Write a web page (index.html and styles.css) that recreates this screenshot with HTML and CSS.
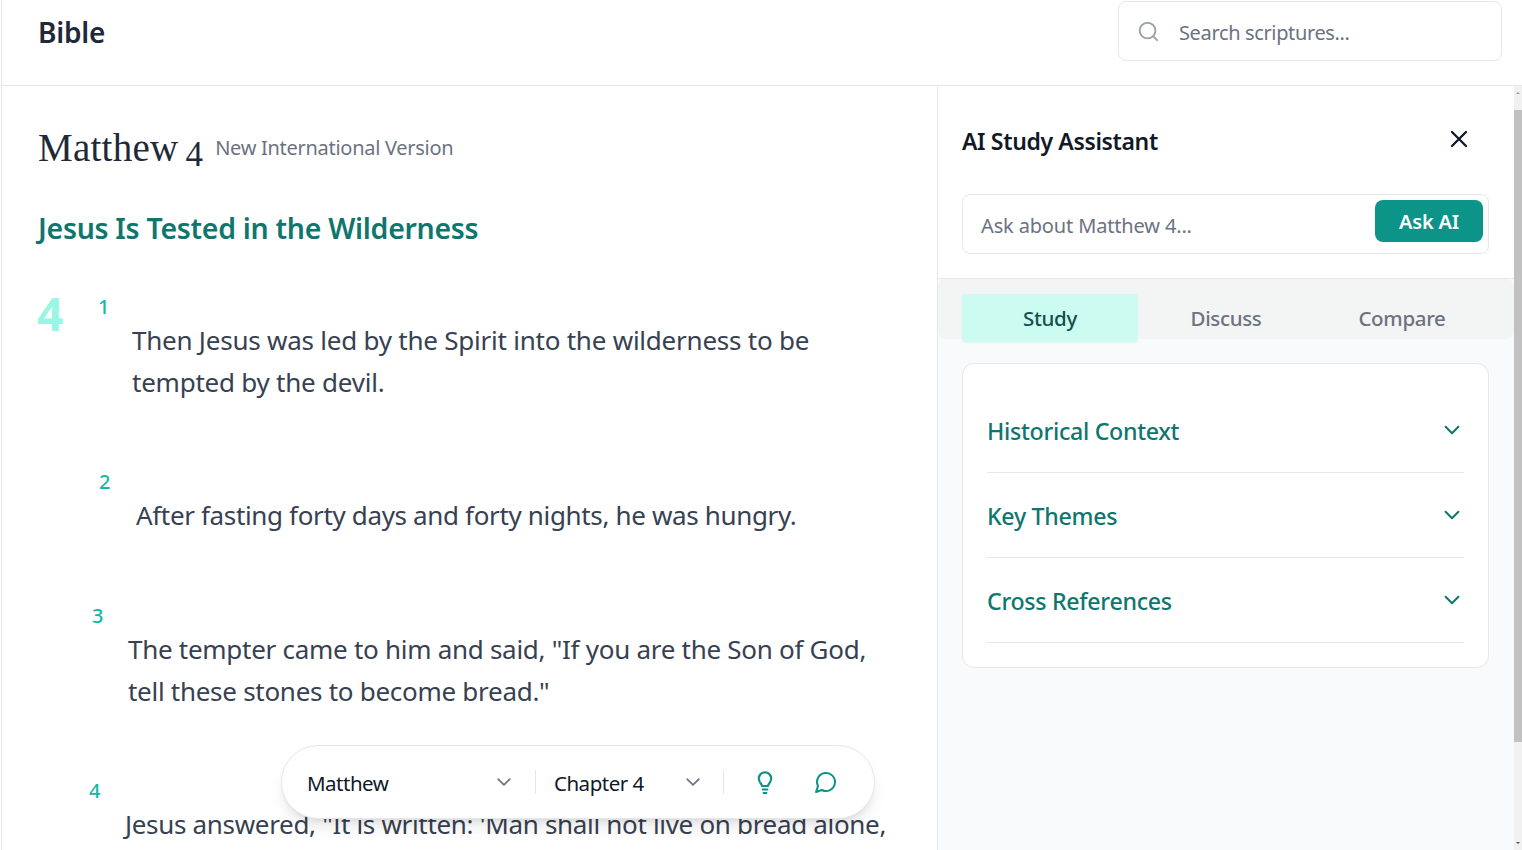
FILE: index.html
```html
<!DOCTYPE html>
<html lang="en">
<head>
<meta charset="utf-8">
<title>Bible</title>
<link rel="stylesheet" href="styles.css">
</head>
<body>
<div class="app">
  <header class="topbar">
    <div class="brand">Bible</div>
    <label class="search">
      <svg class="search-icon" viewBox="0 0 24 24" fill="none" stroke="currentColor" stroke-width="2" stroke-linecap="round"><circle cx="11" cy="11" r="8.2"/><path d="M17.2 17.2 21 21"/></svg>
      <span class="search-text">Search scriptures...</span>
    </label>
  </header>
  <div class="body">
    <main class="reader">
      <div class="title-row">
        <h1 class="book">Matthew <span class="book-num">4</span></h1>
        <span class="version">New International Version</span>
      </div>
      <h2 class="section">Jesus Is Tested in the Wilderness</h2>
      <div class="verses">
        <span class="dropcap">4</span>
        <section class="verse v1">
          <div class="num">1</div>
          <p class="text">Then Jesus was led by the Spirit into the wilderness to be tempted by the devil.</p>
        </section>
        <section class="verse v2">
          <div class="num">2</div>
          <p class="text">After fasting forty days and forty nights, he was hungry.</p>
        </section>
        <section class="verse v3">
          <div class="num">3</div>
          <p class="text">The tempter came to him and said, "If you are the Son of God, tell these stones to become bread."</p>
        </section>
        <section class="verse v4">
          <div class="num">4</div>
          <p class="text">Jesus answered, "It is written: 'Man shall not live on bread alone,</p>
        </section>
      </div>
      <div class="floatbar">
        <div class="pick pick-book"><span class="pick-label">Matthew</span><svg class="chev" viewBox="0 0 24 24" fill="none" stroke="currentColor" stroke-width="2" stroke-linecap="round" stroke-linejoin="round"><path d="m5 8.5 7 7 7-7"/></svg></div>
        <i class="sep"></i>
        <div class="pick pick-ch"><span class="pick-label">Chapter 4</span><svg class="chev" viewBox="0 0 24 24" fill="none" stroke="currentColor" stroke-width="2" stroke-linecap="round" stroke-linejoin="round"><path d="m5 8.5 7 7 7-7"/></svg></div>
        <i class="sep"></i>
        <svg class="tool bulb" viewBox="0 0 24 24" fill="none" stroke="currentColor" stroke-width="2.200" stroke-linejoin="round"><path d="M9 16c0-2.200-3.200-3.300-3.200-7.500a6.200 6.200 0 0 1 12.400 0c0 4.200-3.200 5.300-3.200 7.500z"/><path d="M8.800 19.500h6.400M9.800 23h4.400"/></svg>
        <svg class="tool chat" viewBox="0 0 24 24" fill="none" stroke="currentColor" stroke-width="2" stroke-linecap="round" stroke-linejoin="round"><path d="M7.900 20A9 9 0 1 0 4 16.100L2 22Z"/></svg>
      </div>
    </main>
    <aside class="side">
      <div class="side-head">
        <div class="side-title-row">
          <h3 class="side-title">AI Study Assistant</h3>
          <svg class="close" viewBox="0 0 24 24" fill="none" stroke="currentColor" stroke-width="2.300" stroke-linecap="round"><path d="M5 5l14 14M19 5 5 19"/></svg>
        </div>
        <div class="ask">
          <span class="ask-text">Ask about Matthew 4...</span>
          <button class="ask-btn">Ask AI</button>
        </div>
      </div>
      <div class="tabs">
        <div class="tab active">Study</div>
        <div class="tab">Discuss</div>
        <div class="tab">Compare</div>
      </div>
      <div class="side-content">
        <div class="card">
          <div class="acc"><span class="acc-label">Historical Context</span><svg class="acc-chev" viewBox="0 0 24 24" fill="none" stroke="currentColor" stroke-width="2.200" stroke-linecap="round" stroke-linejoin="round"><path d="m5 8.500 7 7 7-7"/></svg></div>
          <div class="acc"><span class="acc-label">Key Themes</span><svg class="acc-chev" viewBox="0 0 24 24" fill="none" stroke="currentColor" stroke-width="2.200" stroke-linecap="round" stroke-linejoin="round"><path d="m5 8.500 7 7 7-7"/></svg></div>
          <div class="acc"><span class="acc-label">Cross References</span><svg class="acc-chev" viewBox="0 0 24 24" fill="none" stroke="currentColor" stroke-width="2.200" stroke-linecap="round" stroke-linejoin="round"><path d="m5 8.500 7 7 7-7"/></svg></div>
        </div>
      </div>
    </aside>
    <div class="scrollbar"><span class="arrow-up"></span><div class="thumb"></div><span class="arrow-down"></span></div>
  </div>
</div>
</body>
</html>
```
FILE: styles.css
```css
* { box-sizing: border-box; }
html, body { margin: 0; height: 100%; overflow: hidden; background: #fff; }
body { font-family: "Noto Sans", "Open Sans", sans-serif; color: #1f2937; }
.app { height: 850px; display: flex; flex-direction: column; border-left: 1px solid #e5e7eb; margin-left: 1px; }
.topbar { height: 86px; flex: none; border-bottom: 1px solid #e5e7eb; display: flex; justify-content: space-between; align-items: flex-start; padding: 1px 20px 0 36px; }
.brand { font-size: 28px; font-weight: 600; color: #1f2937; line-height: 63px; letter-spacing: -0.2px; }
.search { width: 384px; height: 60px; border: 1px solid #e5e7eb; border-radius: 8px; display: flex; align-items: center; padding-left: 18px; gap: 19px; }
.search-icon { width: 23px; height: 23px; color: #9ca3af; }
.search-text { font-size: 20px; line-height: 28px; padding-top: 3px; color: #6b7280; letter-spacing: -0.36px; }
.body { flex: 1; display: flex; min-height: 0; }
.reader { width: 935px; flex: none; position: relative; overflow: hidden; padding: 37px 0 0 36px; }
.title-row { display: flex; align-items: center; gap: 12px; height: 50px; }
.book { margin: 0; height: 50px; font-family: "Liberation Serif", serif; font-weight: 400; font-size: 39px; line-height: 50px; color: #1f2937; white-space: nowrap; letter-spacing: 0.25px; word-spacing: -3px; }
.book-num { font-size: 35px; vertical-align: -5px; line-height: 30px; }
.version { font-size: 20px; line-height: 26px; color: #6b7280; letter-spacing: -0.28px; }
.section { margin: 35px 0 0; font-size: 28.5px; line-height: 40px; font-weight: 600; color: #0f766e; letter-spacing: -0.3px; }
.verses { position: relative; margin-top: 46px; }
.dropcap { position: absolute; left: -1px; top: -4px; font-size: 46px; line-height: 46px; font-weight: 700; color: #99f6e4; }
.verse { margin-bottom: 66px; }
.num { font-size: 20px; line-height: 25px; color: #14b8a6; font-weight: 500; }
.text { margin: 0; font-size: 26px; line-height: 42px; color: #374151; }
.v1 .num { margin-left: 60px; } .v1 .text { margin-left: 94px; width: 720px; letter-spacing: -0.23px; }
.v2 { margin-bottom: 67px; }
.v2 .num { margin-left: 61px; } .v2 .text { margin-left: 98px; width: 720px; letter-spacing: -0.35px; }
.v3 .num { margin-left: 54px; } .v3 .text { margin-left: 90px; width: 760px; letter-spacing: -0.28px; }
.v4 .num { margin-left: 51px; } .v4 .text { margin-left: 87px; width: 780px; letter-spacing: -0.32px; }
.floatbar { position: absolute; left: 279px; top: 659px; width: 594px; height: 74px; background: #fff; border: 1px solid #e5e7eb; border-radius: 37px; box-shadow: 0 10px 15px -3px rgba(0,0,0,.1), 0 4px 6px -4px rgba(0,0,0,.1); display: flex; align-items: center; padding-left: 25px; }
.pick { display: flex; align-items: center; justify-content: space-between; font-size: 20.5px; color: #111827; letter-spacing: -0.5px; }
.pick-label { padding-top: 2px; }
.pick-book { width: 207px; }
.pick-ch { width: 149px; }
.chev { width: 20px; height: 20px; color: #6b7280; }
.sep { width: 1px; height: 24px; background: #e5e7eb; flex: none; }
.pick-book + .sep { margin: 0 18px 0 21px; }
.pick-ch + .sep { margin-left: 20px; margin-right: 29px; }
.tool { width: 24px; height: 24px; color: #0d9488; flex: none; }
.chat { margin-left: 37px; }
.side { width: 577px; flex: none; border-left: 1px solid #e5e7eb; background: #f9fafb; display: flex; flex-direction: column; }
.side-head { background: #fff; height: 193px; border-bottom: 1px solid #e5e7eb; padding: 24px 24px 0; }
.side-title-row { display: flex; justify-content: space-between; align-items: center; height: 60px; padding-right: 19px; }
.side-title { margin: 0; padding-top: 2px; font-size: 23px; font-weight: 600; color: #111827; letter-spacing: -0.36px; }
.close { width: 24px; height: 24px; color: #111827; margin-top: -2px; }
.ask { margin-top: 24px; width: 527px; height: 60px; border: 1px solid #e5e7eb; border-radius: 8px; display: flex; align-items: flex-start; justify-content: space-between; padding: 0 5px 0 18px; }
.ask-text { font-size: 20px; line-height: 58px; padding-top: 2px; color: #6b7280; letter-spacing: -0.15px; }
.ask-btn { width: 108px; height: 42px; margin-top: 5px; background: #0d9488; color: #fff; border: 0; border-radius: 8px; font: 600 20px "Noto Sans", sans-serif; letter-spacing: -0.2px; }
.tabs { height: 60px; background: #f3f4f4; border-radius: 8px; display: flex; padding: 15px 24px 0; flex: none; }
.tab { flex: 1; height: 48px; display: flex; align-items: center; justify-content: center; font-size: 20.5px; font-weight: 500; color: #6b7280; border-radius: 4px; letter-spacing: -0.33px; }
.tab.active { background: #ccfbf1; color: #134e4a; box-shadow: 0 1px 2px rgba(0,0,0,.05); position: relative; }
.side-content { padding: 24px 24px 0; }
.card { width: 527px; height: 305px; background: #fff; border: 1px solid #e5e7eb; border-radius: 12px; padding: 24px; }
.acc { height: 85px; border-bottom: 1px solid #e5e7eb; display: flex; align-items: center; justify-content: space-between; font-size: 23.2px; font-weight: 500; color: #0f766e; letter-spacing: -0.3px; }
.acc-label { padding-top: 2px; }
.acc-chev { width: 22px; height: 22px; color: #0f766e; margin-right: 1px; }
.scrollbar { width: 8px; flex: none; background: #f1f1f1; display: flex; flex-direction: column; align-items: center; }
.thumb { width: 8px; height: 632px; margin-top: 16px; background: #c1c1c1; }
.arrow-up { margin-top: 6px; height: 0; border: 2px solid transparent; border-bottom-color: #9a9a9a; border-top: 0; }
.arrow-down { margin-top: auto; margin-bottom: 6px; height: 0; border: 2px solid transparent; border-top-color: #505050; border-bottom: 0; }
```
